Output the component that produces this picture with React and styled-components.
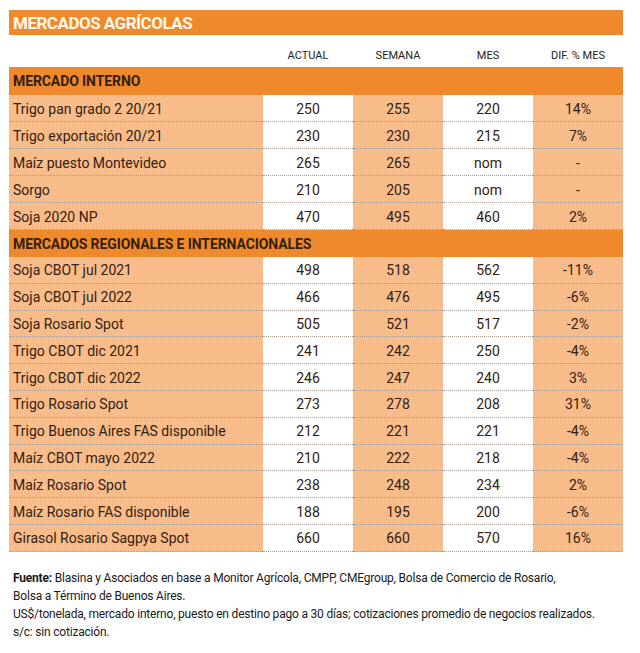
import React from 'react';
import styled, { createGlobalStyle } from 'styled-components';

const GlobalStyle = createGlobalStyle`
  body {
    margin: 0;
    background: #fff;
    font-family: 'Roboto', 'Noto Sans', sans-serif;
  }
`;

const orange = '#ef8a2c';
const peach = '#f8bc8b';
const ink = '#34200f';

const Page = styled.div`
  width: 640px;
  padding: 10px 17px 0 9px;
  box-sizing: border-box;
`;

const TitleBar = styled.div`
  height: 25px;
  background: ${orange};
  display: flex;
  align-items: center;
  padding-left: 4px;
  color: #fff8ee;
  font-weight: 700;
  font-size: 17px;
  letter-spacing: -0.5px;
`;

const Grid = styled.div`
  display: grid;
  grid-template-columns: 254px repeat(4, 90px);
`;

const HeadCell = styled.div`
  height: 32px;
  display: flex;
  align-items: flex-end;
  justify-content: center;
  padding-bottom: 5px;
  box-sizing: border-box;
  font-size: 11px;
  color: #222;
`;

const SectionBar = styled.div`
  grid-column: 1 / -1;
  height: ${({ $h }) => $h}px;
  background: ${orange};
  display: flex;
  align-items: center;
  padding-left: 4px;
  font-weight: 700;
  font-size: 14px;
  letter-spacing: -0.1px;
  color: ${ink};
`;

const Cell = styled.div`
  height: ${({ $h }) => $h}px;
  box-sizing: border-box;
  background: ${({ $peach }) => ($peach ? peach : '#fff')};
  border-bottom: 1px dotted #a89a8e;
  display: flex;
  align-items: center;
  justify-content: ${({ $label }) => ($label ? 'flex-start' : 'center')};
  padding-left: ${({ $label }) => ($label ? '4px' : '0')};
  padding-top: 1px;
  font-size: 14px;
  color: ${ink};
`;

const Footer = styled.div`
  margin-top: 17px;
  padding-left: 4px;
  font-size: 12px;
  letter-spacing: -0.2px;
  line-height: 18px;
  color: #1a1a1a;
  white-space: nowrap;
  b {
    font-weight: 700;
  }
`;

const interno = [
  ['Trigo pan grado 2 20/21', '250', '255', '220', '14%'],
  ['Trigo exportación 20/21', '230', '230', '215', '7%'],
  ['Maíz puesto Montevideo', '265', '265', 'nom', '-'],
  ['Sorgo', '210', '205', 'nom', '-'],
  ['Soja 2020 NP', '470', '495', '460', '2%'],
];

const regionales = [
  ['Soja CBOT jul 2021', '498', '518', '562', '-11%'],
  ['Soja CBOT jul 2022', '466', '476', '495', '-6%'],
  ['Soja Rosario Spot', '505', '521', '517', '-2%'],
  ['Trigo CBOT dic 2021', '241', '242', '250', '-4%'],
  ['Trigo CBOT dic 2022', '246', '247', '240', '3%'],
  ['Trigo Rosario Spot', '273', '278', '208', '31%'],
  ['Trigo Buenos Aires FAS disponible', '212', '221', '221', '-4%'],
  ['Maíz CBOT mayo 2022', '210', '222', '218', '-4%'],
  ['Maíz Rosario Spot', '238', '248', '234', '2%'],
  ['Maíz Rosario FAS disponible', '188', '195', '200', '-6%'],
  ['Girasol Rosario Sagpya Spot', '660', '660', '570', '16%'],
];

function Rows({ rows, h }) {
  return rows.map((r) =>
    r.map((v, i) => (
      <Cell key={r[0] + i} $h={h} $label={i === 0} $peach={i % 2 === 0}>
        {v}
      </Cell>
    ))
  );
}

export default function App() {
  return (
    <Page>
      <GlobalStyle />
      <TitleBar>MERCADOS AGRÍCOLAS</TitleBar>
      <Grid>
        <HeadCell />
        <HeadCell>ACTUAL</HeadCell>
        <HeadCell>SEMANA</HeadCell>
        <HeadCell>MES</HeadCell>
        <HeadCell>DIF. % MES</HeadCell>
        <SectionBar $h={28}>MERCADO INTERNO</SectionBar>
        <Rows rows={interno} h={27} />
        <SectionBar $h={27}>MERCADOS REGIONALES E INTERNACIONALES</SectionBar>
        <Rows rows={regionales} h={26.8} />
      </Grid>
      <Footer>
        <div>
          <b>Fuente:</b> Blasina y Asociados en base a Monitor Agrícola, CMPP, CMEgroup, Bolsa de Comercio de Rosario,
        </div>
        <div>Bolsa a Término de Buenos Aires.</div>
        <div>US$/tonelada, mercado interno, puesto en destino pago a 30 días; cotizaciones promedio de negocios realizados.</div>
        <div>s/c: sin cotización.</div>
      </Footer>
    </Page>
  );
}
